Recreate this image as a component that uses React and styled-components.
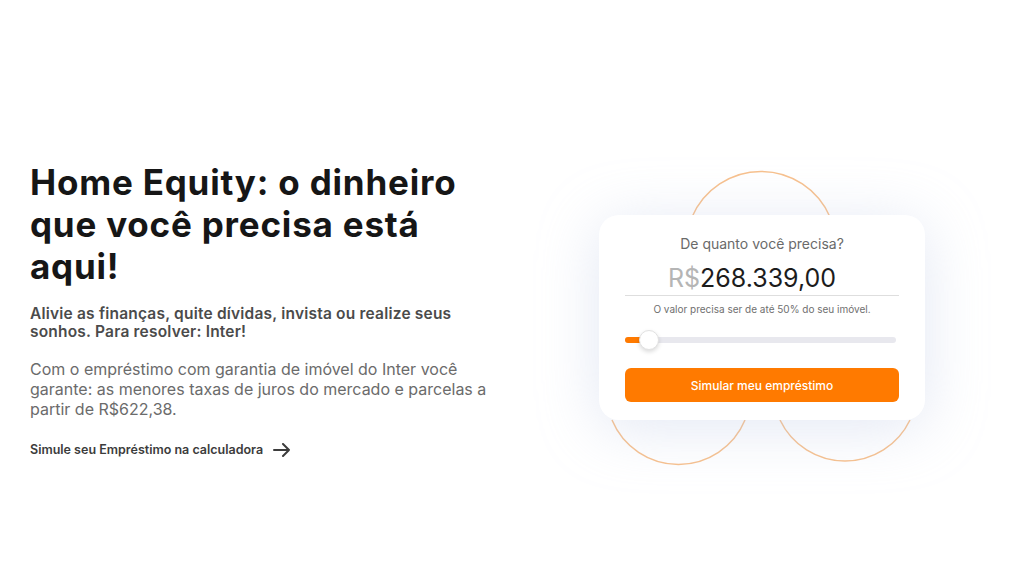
import React from 'react'
import styled, {createGlobalStyle} from 'styled-components'

const GlobalStyle = createGlobalStyle`
  html, body {
    margin: 0;
    padding: 0;
    background: #ffffff;
    font-family: Inter, "Noto Sans", sans-serif;
  }
`

const Page = styled.div`
  display: flex;
  align-items: flex-start;
  height: 576px;
  padding: 161px 0 0 30px;
  box-sizing: border-box;
`
const Intro = styled.div`
  width: 470px;
`
const Title = styled.h1`
  max-width: 440px;
  margin: 0 0 18px 0;
  font-size: 35px;
  line-height: 42px;
  font-weight: 700;
  color: #161616;
  letter-spacing: 0.8px;
`
const Lead = styled.p`
  max-width: 455px;
  margin: 0 0 18px 0;
  font-size: 15.5px;
  line-height: 18px;
  font-weight: 600;
  color: #4b4b4b;
  letter-spacing: 0.2px;
`
const Body = styled.p`
  margin: 0 0 19px 0;
  font-size: 16px;
  line-height: 20px;
  color: #6b6b6b;
`
const Link = styled.a`
  display: inline-flex;
  align-items: center;
  gap: 10px;
  font-size: 12.5px;
  font-weight: 600;
  color: #3c3c3c;
  text-decoration: none;
`

const Stage = styled.div`
  flex: 1;
  display: flex;
  justify-content: center;
  padding-top: 54px;
`
const CardWrap = styled.div`
  position: relative;
  width: 326px;
`
const Decor = styled.svg`
  position: absolute;
  left: 10px;
  top: -48px;
  pointer-events: none;
`
const Card = styled.div`
  position: relative;
  background: #ffffff;
  border-radius: 20px;
  box-shadow: 0 8px 60px rgba(185, 198, 228, 0.4);
  padding: 20px 26px 18px 26px;
  display: flex;
  flex-direction: column;
  align-items: center;
`
const Question = styled.div`
  font-size: 14px;
  color: #6a6a6a;
  margin-bottom: 11px;
`
const Amount = styled.div`
  width: 100%;
  box-sizing: border-box;
  padding: 0 20px 2px 0;
  text-align: center;
  font-size: 25px;
  line-height: 30px;
  color: #1c1c1c;
  border-bottom: 1px solid #dedede;
  margin-bottom: 7px;
`
const Currency = styled.span`
  color: #b5b5b5;
`
const Hint = styled.div`
  font-size: 10px;
  color: #6f6f6f;
  margin-bottom: 22px;
`
const Track = styled.div`
  position: relative;
  width: 99%;
  align-self: flex-start;
  height: 6px;
  border-radius: 3px;
  background: #e8e8ee;
  margin-bottom: 25px;
`
const Fill = styled.div`
  height: 100%;
  border-radius: 3px;
  background: #ff7a00;
`
const Thumb = styled.div`
  position: absolute;
  top: 50%;
  width: 18px;
  height: 18px;
  margin: -10px 0 0 -10px;
  border-radius: 50%;
  background: #ffffff;
  border: 1px solid #e2e2e2;
  box-shadow: 0 2px 4px rgba(0, 0, 0, 0.15);
`
const Button = styled.button`
  width: 100%;
  height: 34px;
  border: none;
  border-radius: 6px;
  background: #ff7a00;
  color: #ffffff;
  font-family: Inter, sans-serif;
  font-size: 12px;
  font-weight: 500;
`

const Arrow = () =>
  <svg width="18" height="14" viewBox="0 0 18 14" fill="none" stroke="#3c3c3c" strokeWidth="2" strokeLinecap="round" strokeLinejoin="round">
    <path d="M1 7h15M10 1l6 6-6 6"/>
  </svg>

const progress = 9

export default () =>
  <>
    <GlobalStyle/>
    <Page>
      <Intro>
        <Title>Home Equity: o dinheiro que você precisa está aqui!</Title>
        <Lead>Alivie as finanças, quite dívidas, invista ou realize seus sonhos. Para resolver: Inter!</Lead>
        <Body>Com o empréstimo com garantia de imóvel do Inter você garante: as menores taxas de juros do mercado e parcelas a partir de R$622,38.</Body>
        <Link href="#">Simule seu Empréstimo na calculadora <Arrow/></Link>
      </Intro>
      <Stage>
        <CardWrap>
          <Decor width="310" height="310" viewBox="0 0 310 310" fill="none" stroke="#f7c08d" strokeWidth="1.5">
            <path d="M83 50 A75 75 0 0 1 221 50"/>
            <path d="M3 253 A72 72 0 0 0 136 253"/>
            <path d="M171 253 A72 72 0 0 0 301 253"/>
          </Decor>
          <Card>
            <Question>De quanto você precisa?</Question>
            <Amount><Currency>R$</Currency>268.339,00</Amount>
            <Hint>O valor precisa ser de até 50% do seu imóvel.</Hint>
            <Track>
              <Fill style={{width: `${progress}%`}}/>
              <Thumb style={{left: `${progress}%`}}/>
            </Track>
            <Button>Simular meu empréstimo</Button>
          </Card>
        </CardWrap>
      </Stage>
    </Page>
  </>
